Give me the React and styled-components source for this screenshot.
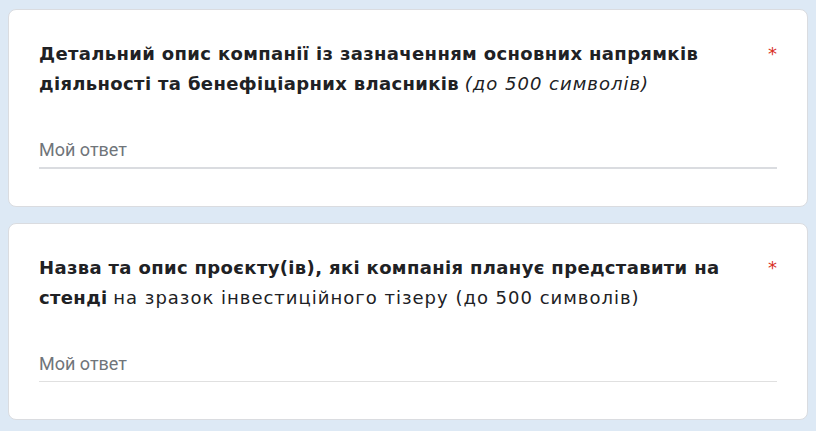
import React from 'react';
import styled, { createGlobalStyle } from 'styled-components';

const GlobalStyle = createGlobalStyle`
  html, body {
    margin: 0;
    padding: 0;
    background: #dde9f5;
  }
  body {
    font-family: "DejaVu Sans", "Noto Sans", sans-serif;
  }
`;

const Page = styled.div`
  display: flex;
  flex-direction: column;
  gap: 16px;
  padding: 9px 8px;
`;

const Card = styled.div`
  background: #fff;
  border: 1px solid #dadce0;
  border-radius: 8px;
  padding: 29px 30px 37px;
`;

const Header = styled.div`
  display: flex;
  align-items: flex-start;
  gap: 24px;
`;

const Question = styled.div`
  flex: 1;
  font-size: 18px;
  line-height: 30px;
  color: #202124;
`;

const Strong = styled.span`
  font-weight: 700;
  letter-spacing: 0.35px;
`;

const Note = styled.span`
  font-weight: 400;
  letter-spacing: 1px;
  font-style: ${(p) => (p.$italic ? 'italic' : 'normal')};
`;

const Required = styled.span`
  color: #d93025;
  font-size: 18px;
  line-height: 30px;
`;

const Answer = styled.div`
  margin-top: 39px;
  padding-bottom: 5px;
  border-bottom: ${(p) => (p.$active ? '2px solid #dadce0' : '1px solid #e0e0e0')};
  font-family: Roboto, "Liberation Sans", sans-serif;
  font-size: 18px;
  line-height: 24px;
  color: #70757a;
`;

export default function App() {
  return (
    <>
      <GlobalStyle />
      <Page>
        <Card>
          <Header>
            <Question>
              <Strong>Детальний опис компанії із зазначенням основних напрямків діяльності та бенефіціарних власників</Strong>{' '}
              <Note $italic>(до 500 символів)</Note>
            </Question>
            <Required>*</Required>
          </Header>
          <Answer $active>Мой ответ</Answer>
        </Card>
        <Card>
          <Header>
            <Question>
              <Strong>Назва та опис проєкту(ів), які компанія планує представити на стенді</Strong>{' '}
              <Note>на зразок інвестиційного тізеру (до 500 символів)</Note>
            </Question>
            <Required>*</Required>
          </Header>
          <Answer>Мой ответ</Answer>
        </Card>
      </Page>
    </>
  );
}
